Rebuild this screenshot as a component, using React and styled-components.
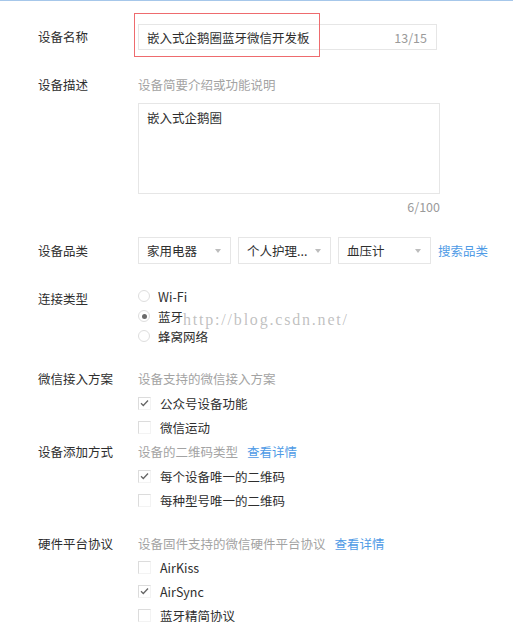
import React from 'react';
import styled, { createGlobalStyle } from 'styled-components';

const GlobalStyle = createGlobalStyle`
  html, body {
    margin: 0;
    padding: 0;
    background: #fff;
  }
  body {
    font-family: "Noto Sans CJK SC", "Noto Sans", sans-serif;
    font-size: 12.5px;
    color: #2e2e2e;
  }
`;

const Page = styled.div`
  position: relative;
  width: 513px;
  height: 625px;
  overflow: hidden;
  border-top: 1px solid #a6c7ea;
  box-sizing: border-box;
  padding: 23px 0 0 38px;
`;

const Row = styled.div`
  display: grid;
  grid-template-columns: 100px 1fr;
  align-items: ${(p) => (p.$center ? 'center' : 'start')};
  margin-top: ${(p) => p.$mt || 0}px;
`;

const Label = styled.div`
  color: #2e2e2e;
  line-height: 20px;
  margin-top: ${(p) => p.$mt || 0}px;
  white-space: nowrap;
`;

const Field = styled.div`
  display: flex;
  flex-direction: column;
  align-items: flex-start;
`;

const InputWrap = styled.div`
  position: relative;
`;

const Input = styled.div`
  width: 299px;
  height: 26px;
  box-sizing: border-box;
  border: 1px solid #e6e6e6;
  display: flex;
  align-items: center;
  justify-content: space-between;
  padding: 0 9px 0 8px;
  color: #2e2e2e;
`;

const Counter = styled.span`
  color: #9a9a9a;
  font-size: 12.5px;
`;

const RedMark = styled.div`
  position: absolute;
  left: -4px;
  top: -11px;
  width: 186px;
  height: 44px;
  box-sizing: border-box;
  border: 1.5px solid #ee6b6e;
`;

const Hint = styled.div`
  color: #a3a3a3;
  line-height: 20px;
  white-space: nowrap;
  display: flex;
  gap: 9px;
`;

const Link = styled.a`
  color: #4f9be6;
  text-decoration: none;
  cursor: pointer;
  white-space: nowrap;
`;

const TextArea = styled.div`
  width: 302px;
  height: 91px;
  box-sizing: border-box;
  border: 1px solid #e6e6e6;
  margin-top: 8px;
  padding: 4px 8px;
  line-height: 20px;
  color: #2e2e2e;
`;

const AreaCounter = styled(Counter)`
  align-self: stretch;
  width: 302px;
  text-align: right;
  line-height: 16px;
  margin-top: 5px;
`;

const SelectRow = styled.div`
  display: flex;
  align-items: center;
  gap: 7px;
`;

const Select = styled.div`
  width: 93px;
  height: 27px;
  box-sizing: border-box;
  border: 1px solid #e6e6e6;
  display: flex;
  align-items: center;
  justify-content: space-between;
  padding: 0 9px 0 8px;
  color: #2e2e2e;
  white-space: nowrap;
`;

const Caret = styled.span`
  width: 0;
  height: 0;
  border-left: 3.5px solid transparent;
  border-right: 3.5px solid transparent;
  border-top: 4px solid #bdbdbd;
`;

const Options = styled.div`
  display: flex;
  flex-direction: column;
  margin-top: ${(p) => p.$mt || 0}px;
`;

const Option = styled.label`
  display: flex;
  align-items: center;
  height: ${(p) => p.$h}px;
  gap: 8px;
  color: #2e2e2e;
  white-space: nowrap;
`;

const Radio = styled.span`
  width: 12px;
  height: 12px;
  box-sizing: border-box;
  border-radius: 50%;
  border: 1px solid #dedede;
  display: flex;
  align-items: center;
  justify-content: center;
  &::after {
    content: '';
    width: 5px;
    height: 5px;
    border-radius: 50%;
    background: ${(p) => (p.$on ? '#6b6b6b' : 'transparent')};
  }
`;

const Box = styled.span`
  width: 13px;
  height: 13px;
  box-sizing: border-box;
  border-left: 1px solid #dcdcdc;
  border-top: 1px solid #dcdcdc;
  border-right: 1px solid #f3f3f3;
  border-bottom: 1px solid #f3f3f3;
  display: flex;
  align-items: center;
  justify-content: center;
  margin-right: 1px;
`;

const Watermark = styled.div`
  position: absolute;
  left: 183px;
  top: 310px;
  font-family: "Liberation Serif", serif;
  font-size: 16px;
  letter-spacing: 1.8px;
  color: rgba(140, 140, 140, 0.55);
  pointer-events: none;
  white-space: nowrap;
`;

const Check = () => (
  <svg width="9" height="8" viewBox="0 0 9 8">
    <path d="M1 4.3 L3.3 6.5 L8 1.5" fill="none" stroke="#666" strokeWidth="1.3" />
  </svg>
);

const CheckOption = ({ on, children }) => (
  <Option $h={24}>
    <Box>{on && <Check />}</Box>
    {children}
  </Option>
);

const RadioOption = ({ on, children }) => (
  <Option $h={20}>
    <Radio $on={on} />
    {children}
  </Option>
);

export default function App() {
  return (
    <>
      <GlobalStyle />
      <Page>
        <Row $center>
          <Label>设备名称</Label>
          <InputWrap>
            <Input>
              <span>嵌入式企鹅圈蓝牙微信开发板</span>
              <Counter>13/15</Counter>
            </Input>
            <RedMark />
          </InputWrap>
        </Row>

        <Row $mt={25}>
          <Label>设备描述</Label>
          <Field>
            <Hint>设备简要介绍或功能说明</Hint>
            <TextArea>嵌入式企鹅圈</TextArea>
            <AreaCounter>6/100</AreaCounter>
          </Field>
        </Row>

        <Row $center $mt={22}>
          <Label>设备品类</Label>
          <SelectRow>
            <Select>家用电器<Caret /></Select>
            <Select>个人护理...<Caret /></Select>
            <Select>血压计<Caret /></Select>
            <Link>搜索品类</Link>
          </SelectRow>
        </Row>

        <Row $mt={22}>
          <Label $mt={3}>连接类型</Label>
          <Options>
            <RadioOption>Wi-Fi</RadioOption>
            <RadioOption on>蓝牙</RadioOption>
            <RadioOption>蜂窝网络</RadioOption>
          </Options>
        </Row>

        <Row $mt={23}>
          <Label>微信接入方案</Label>
          <Field>
            <Hint>设备支持的微信接入方案</Hint>
            <Options $mt={2}>
              <CheckOption on>公众号设备功能</CheckOption>
              <CheckOption>微信运动</CheckOption>
            </Options>
          </Field>
        </Row>

        <Row $mt={3}>
          <Label>设备添加方式</Label>
          <Field>
            <Hint>设备的二维码类型<Link>查看详情</Link></Hint>
            <Options $mt={2}>
              <CheckOption on>每个设备唯一的二维码</CheckOption>
              <CheckOption>每种型号唯一的二维码</CheckOption>
            </Options>
          </Field>
        </Row>

        <Row $mt={22}>
          <Label>硬件平台协议</Label>
          <Field>
            <Hint>设备固件支持的微信硬件平台协议<Link>查看详情</Link></Hint>
            <Options $mt={1}>
              <CheckOption>AirKiss</CheckOption>
              <CheckOption on>AirSync</CheckOption>
              <CheckOption>蓝牙精简协议</CheckOption>
            </Options>
          </Field>
        </Row>

        <Watermark>http://blog.csdn.net/</Watermark>
      </Page>
    </>
  );
}
